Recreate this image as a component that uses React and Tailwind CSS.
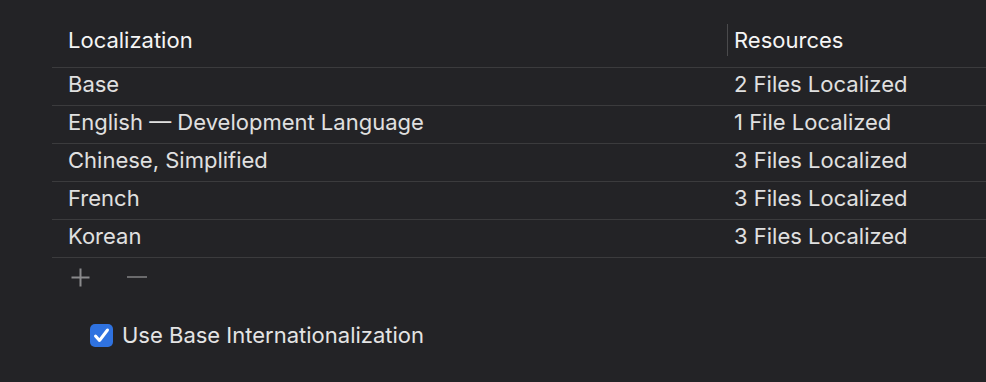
import React from 'react';

const rows = [
  ['Base', '2 Files Localized'],
  ['English — Development Language', '1 File Localized'],
  ['Chinese, Simplified', '3 Files Localized'],
  ['French', '3 Files Localized'],
  ['Korean', '3 Files Localized'],
];

export default function App() {
  return (
    <div
      className="w-[986px] h-[382px] bg-[#232326] text-[#e0e0e0] overflow-hidden"
      style={{ fontFamily: 'Inter, "Noto Sans", sans-serif' }}
    >
      <div className="pl-[52px] pt-[24px]">
        {/* header */}
        <div className="flex h-[44px] border-b border-[#3b3b3d] text-[22px] text-[#f5f5f5]">
          <div className="w-[675px] pl-[16px] flex items-start">
            <span className="leading-[32px]">Localization</span>
          </div>
          <div className="w-px h-[32px] bg-[#4a4a4c]" />
          <div className="pl-[6px] leading-[32px]">Resources</div>
        </div>
        {rows.map(([name, res]) => (
          <div key={name} className="flex h-[38px] items-center pb-[4px] border-b border-[#3b3b3d] text-[22px]">
            <div className="w-[682px] pl-[16px]">{name}</div>
            <div>{res}</div>
          </div>
        ))}
        {/* add / remove */}
        <div className="flex items-center h-[38px] pl-[19px] gap-[36px]">
          <svg width="19" height="19" viewBox="0 0 19 19">
            <path d="M9.5 0.5v18M0.5 9.5h18" stroke="#8a8a8c" strokeWidth="2" />
          </svg>
          <svg width="22" height="20" viewBox="0 0 22 20">
            <path d="M1 10h20" stroke="#6a6a6c" strokeWidth="2" />
          </svg>
        </div>
      </div>
      <div className="flex items-center gap-[9px] pl-[90px] mt-[23px]">
        <div className="w-[23px] h-[23px] rounded-[5px] bg-[#2f72e0] flex items-center justify-center">
          <svg width="23" height="23" viewBox="0 0 23 23">
            <path d="M5.5 12l4 4.5L17.5 6" stroke="#fff" strokeWidth="3" fill="none" strokeLinecap="round" strokeLinejoin="round" />
          </svg>
        </div>
        <span className="text-[22px] text-[#e4e4e4]">Use Base Internationalization</span>
      </div>
    </div>
  );
}
